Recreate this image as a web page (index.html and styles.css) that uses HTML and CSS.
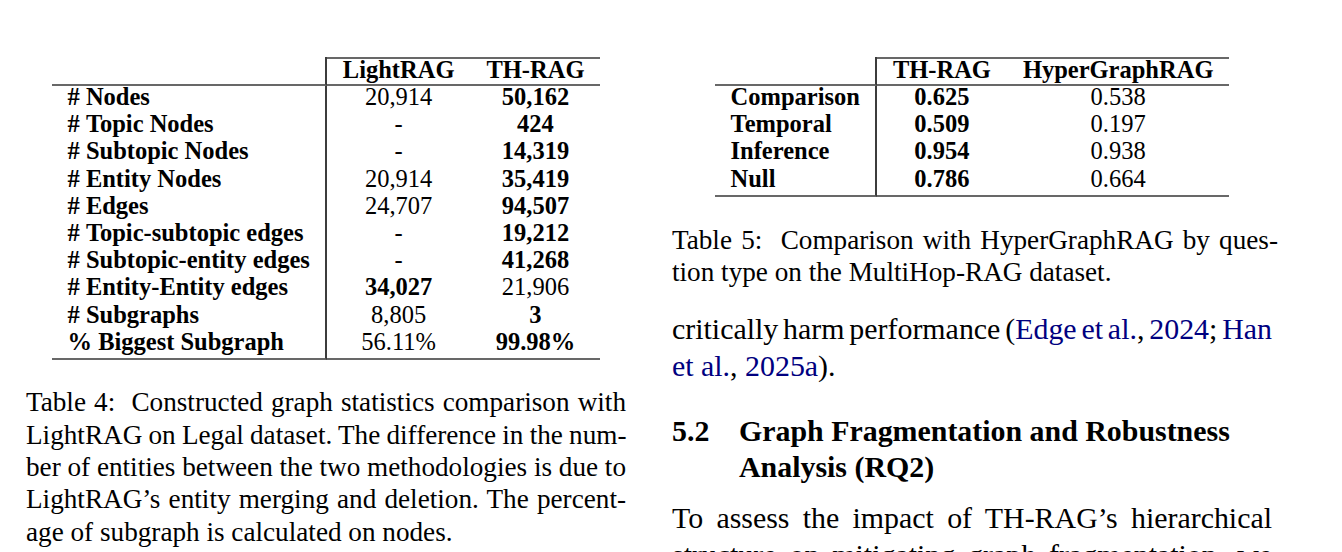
FILE: index.html
```html
<!DOCTYPE html>
<html lang="en">
<head>
<meta charset="utf-8">
<title>TH-RAG tables</title>
<link rel="stylesheet" href="styles.css">
</head>
<body>
<div class="page">
  <div class="col col-left">
    <table class="stats t4">
      <thead>
        <tr>
          <th class="label-col blank"></th>
          <th>LightRAG</th>
          <th>TH-RAG</th>
        </tr>
      </thead>
      <tbody>
        <tr><td class="label-col">#&nbsp;Nodes</td><td>20,914</td><td><b>50,162</b></td></tr>
        <tr><td class="label-col">#&nbsp;Topic Nodes</td><td>-</td><td><b>424</b></td></tr>
        <tr><td class="label-col">#&nbsp;Subtopic Nodes</td><td>-</td><td><b>14,319</b></td></tr>
        <tr><td class="label-col">#&nbsp;Entity Nodes</td><td>20,914</td><td><b>35,419</b></td></tr>
        <tr><td class="label-col">#&nbsp;Edges</td><td>24,707</td><td><b>94,507</b></td></tr>
        <tr><td class="label-col">#&nbsp;Topic-subtopic edges</td><td>-</td><td><b>19,212</b></td></tr>
        <tr><td class="label-col">#&nbsp;Subtopic-entity edges</td><td>-</td><td><b>41,268</b></td></tr>
        <tr><td class="label-col">#&nbsp;Entity-Entity edges</td><td><b>34,027</b></td><td>21,906</td></tr>
        <tr><td class="label-col">#&nbsp;Subgraphs</td><td>8,805</td><td><b>3</b></td></tr>
        <tr class="last-row"><td class="label-col">%&nbsp;Biggest Subgraph</td><td>56.11%</td><td><b>99.98%</b></td></tr>
      </tbody>
    </table>

    <div class="caption caption-t4">
      <span class="line">Table 4:&nbsp;&nbsp;Constructed graph statistics comparison with</span>
      <span class="line snug">LightRAG on Legal dataset. The difference in the num-</span>
      <span class="line snug">ber of entities between the two methodologies is due to</span>
      <span class="line">LightRAG’s entity merging and deletion. The percent-</span>
      <span class="line last">age of subgraph is calculated on nodes.</span>
    </div>
  </div>

  <div class="col col-right">
    <table class="stats t5">
      <thead>
        <tr>
          <th class="label-col blank"></th>
          <th>TH-RAG</th>
          <th>HyperGraphRAG</th>
        </tr>
      </thead>
      <tbody>
        <tr><td class="label-col">Comparison</td><td><b>0.625</b></td><td>0.538</td></tr>
        <tr><td class="label-col">Temporal</td><td><b>0.509</b></td><td>0.197</td></tr>
        <tr><td class="label-col">Inference</td><td><b>0.954</b></td><td>0.938</td></tr>
        <tr class="last-row"><td class="label-col">Null</td><td><b>0.786</b></td><td>0.664</td></tr>
      </tbody>
    </table>

    <div class="caption caption-t5">
      <span class="line wide">Table 5:&nbsp;&nbsp;Comparison with HyperGraphRAG by ques-</span>
      <span class="line last">tion type on the MultiHop-RAG dataset.</span>
    </div>

    <p class="body-text p1">
      <span class="line tight">critically harm performance (<a class="cite" href="#">Edge et al.</a>, <a class="cite" href="#">2024</a>; <a class="cite" href="#">Han</a></span>
      <span class="line last"><a class="cite" href="#">et al.</a>, <a class="cite" href="#">2025a</a>).</span>
    </p>

    <h3 class="section-head">
      <span class="sec-num">5.2</span>
      <span class="sec-title">Graph Fragmentation and Robustness Analysis (RQ2)</span>
    </h3>

    <p class="body-text p2">
      <span class="line">To assess the impact of TH-RAG’s hierarchical</span>
      <span class="line">structure on mitigating graph fragmentation, we</span>
    </p>
  </div>
</div>
</body>
</html>
```

FILE: styles.css
```css
html, body {
  margin: 0;
  padding: 0;
  background: #ffffff;
}

body {
  font-family: "Liberation Serif", "Times New Roman", serif;
  color: #000000;
  overflow: hidden;
}

.page {
  display: grid;
  grid-template-columns: 600px 600px;
  column-gap: 46px;
  padding-left: 26px;
  padding-top: 57px;
}

.col {
  display: flex;
  flex-direction: column;
  align-items: stretch;
}

/* ---------- tables ---------- */
.stats {
  border-collapse: separate;
  border-spacing: 0;
  font-size: 24.5px;
  align-self: center;
}

.stats th,
.stats td {
  padding: 0 16px;
  line-height: 21px;
  text-align: center;
  white-space: nowrap;
  font-weight: normal;
}

.stats th {
  font-weight: bold;
  border-top: 2px solid #686868;
  border-bottom: 2px solid #686868;
  padding-bottom: 4px;
}

.stats th.blank {
  border-top: none;
}

.stats td {
  height: 27.2px;
  box-sizing: border-box;
  padding-bottom: 6.2px;
}

.stats .label-col {
  text-align: left;
  font-weight: bold;
  border-right: 2px solid #3c3c3c;
  padding-right: 15px;
}

.stats .last-row td {
  border-bottom: 2px solid #686868;
  height: 29.2px;
}

.stats b {
  font-weight: bold;
}

/* ---------- captions & body ---------- */
.line {
  display: block;
  text-align: justify;
  text-align-last: justify;
  white-space: nowrap;
}

.line.last {
  text-align-last: left;
}

.line.tight {
  word-spacing: -3px;
}

.line.snug {
  word-spacing: -0.6px;
}

.line.wide {
  margin-right: -6px;
}

.caption {
  font-size: 27.2px;
  line-height: 32.3px;
}

.caption-t4 {
  margin-top: 26.5px;
}

.caption-t5 {
  margin-top: 27px;
}

.body-text {
  font-size: 29.9px;
  line-height: 37px;
  margin: 0;
}

.p1 {
  margin-top: 21.5px;
}

.p2 {
  margin-top: 13.5px;
}

.cite {
  color: #000080;
  text-decoration: none;
}

.section-head {
  display: grid;
  grid-template-columns: 67px 1fr;
  margin: 29.5px 0 0 0;
  font-size: 29.9px;
  line-height: 36px;
  font-weight: bold;
}

.sec-title {
  padding-right: 40px;
}
```
